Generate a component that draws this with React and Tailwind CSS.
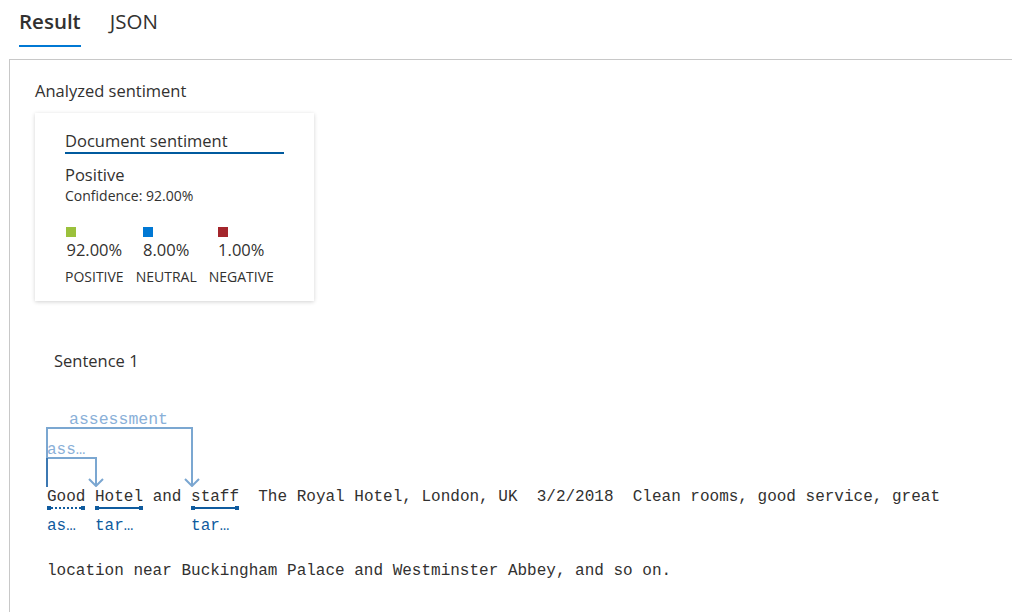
import React from "react";

const sans = { fontFamily: '"Segoe UI", "Open Sans", "Noto Sans", sans-serif' };

function Token({ word, label, dotted }) {
  return (
    <div className="flex flex-col">
      <span className="leading-[20px] text-[#323130]">{word}</span>
      <div className="flex items-center h-[4px] mt-[-1px]">
        <span className="w-[4px] h-[4px] bg-[#0f5b9e]" />
        {dotted ? (
          <span className="flex-1 border-t-2 border-dotted border-[#0f5b9e]" />
        ) : (
          <span className="flex-1 h-[2px] bg-[#0f5b9e]" />
        )}
        <span className="w-[4px] h-[4px] bg-[#0f5b9e]" />
      </div>
      <span className="mt-[6px] leading-[20px] text-[#0f5b9e]">{label}</span>
    </div>
  );
}

function Arcs() {
  return (
    <svg width="170" height="80" className="block">
      <path d="M7 80 L7 21 L152 21 L152 78" fill="none" stroke="#7ba7d1" strokeWidth="2" />
      <path d="M7 51 L56 51 L56 78" fill="none" stroke="#7ba7d1" strokeWidth="2" />
      <path d="M7 51 L7 80" fill="none" stroke="#3c78b2" strokeWidth="2" />
      <polyline points="145,72 152,79 159,72" fill="none" stroke="#7ba7d1" strokeWidth="2" />
      <polyline points="49,72 56,79 63,72" fill="none" stroke="#7ba7d1" strokeWidth="2" />
      <text x="29" y="17" fill="#8ab0d8" fontSize="16.5" fontFamily='"Liberation Mono", monospace'>assessment</text>
      <text x="7" y="47" fill="#8ab0d8" fontSize="16" fontFamily='"Liberation Mono", monospace'>ass…</text>
    </svg>
  );
}

function Score({ color, value, label }) {
  return (
    <div className="flex flex-col items-center">
      <div>
        <div className={`w-[10px] h-[10px] ${color}`} />
        <div className="mt-[2px] text-[16.5px] leading-[22px] text-[#323130]">{value}</div>
      </div>
      <div className="mt-[7px] text-[14px] leading-[18px] text-[#323130]">{label}</div>
    </div>
  );
}

export default function App() {
  return (
    <div className="min-h-[612px] bg-white text-[#323130]" style={sans}>
      {/* Tabs */}
      <div className="flex gap-[29px] pl-[19px] pt-[7px]">
        <div className="flex flex-col">
          <span className="text-[20.5px] leading-[28px] font-semibold">Result</span>
          <span className="mt-[10px] h-[2px] bg-[#0078d4]" />
        </div>
        <span className="text-[20.5px] leading-[28px]">JSON</span>
      </div>

      <div className="ml-[9px] mt-[12px] border-l border-t border-[#c8c8c8] h-[553px] pl-[25px] pt-[20px]">
        <div className="text-[16.5px] leading-[22px]">Analyzed sentiment</div>

        {/* Document sentiment card */}
        <div className="mt-[11px] w-[279px] h-[188px] bg-white shadow-[0_1px_4px_rgba(0,0,0,0.18)] pl-[30px] pt-[17px]">
          <div className="w-[219px] border-b-2 border-[#005a9e] text-[16.5px] leading-[22px]">Document sentiment</div>
          <div className="mt-[10px] text-[16.5px] leading-[22px]">Positive</div>
          <div className="mt-[1px] text-[14px] leading-[18px]">Confidence: 92.00%</div>
          <div className="mt-[22px] flex gap-[12px]">
            <Score color="bg-[#9bc13c]" value="92.00%" label="POSITIVE" />
            <Score color="bg-[#0078d4]" value="8.00%" label="NEUTRAL" />
            <Score color="bg-[#a4262c]" value="1.00%" label="NEGATIVE" />
          </div>
        </div>

        <div className="mt-[49px] ml-[19px] text-[16.5px] leading-[22px]">Sentence 1</div>

        {/* Sentence analysis */}
        <div className="mt-[35px] ml-[5px] text-[16px]" style={{ fontFamily: '"Liberation Mono", monospace' }}>
          <Arcs />
          <div className="flex items-start pl-[7px] whitespace-pre">
            <Token word="Good" label="as…" dotted />
            <span className="leading-[20px]"> </span>
            <Token word="Hotel" label="tar…" />
            <span className="leading-[20px]"> and </span>
            <Token word="staff" label="tar…" />
            <span className="leading-[20px]">  The Royal Hotel, London, UK  3/2/2018  Clean rooms, good service, great</span>
          </div>
          <div className="mt-[25px] pl-[7px] leading-[20px] whitespace-pre">
            location near Buckingham Palace and Westminster Abbey, and so on.
          </div>
        </div>
      </div>
    </div>
  );
}
